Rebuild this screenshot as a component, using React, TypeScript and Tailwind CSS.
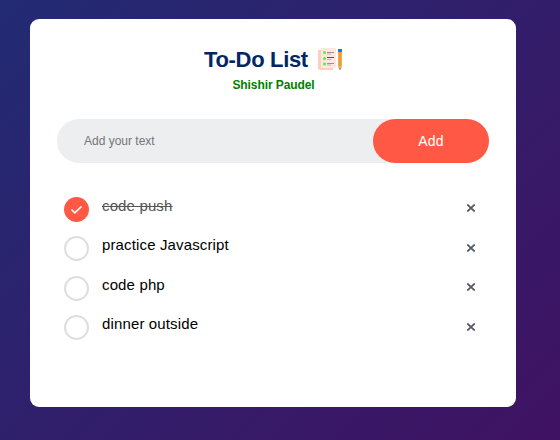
import { useState } from "react";

type Task = { text: string; done: boolean };

const initialTasks: Task[] = [
  { text: "code push", done: true },
  { text: "practice Javascript", done: false },
  { text: "code php", done: false },
  { text: "dinner outside", done: false },
];

function ListIcon() {
  return (
    <svg className="-mt-[2px] ml-[9px] h-[24px] w-[26px] shrink-0" viewBox="0 0 26 24">
      <path d="M1 3h15v20H3q-2 0-2-2z" fill="#fccfc3" />
      <path d="M4 1h15v18q0 2-2 2H4z" fill="#ffe7dc" />
      <g fill="#4df052">
        <circle cx="7.5" cy="5.5" r="1.5" />
        <circle cx="7.5" cy="11.5" r="1.5" />
        <circle cx="7.5" cy="17" r="1.5" />
      </g>
      <path d="M10 5.5h7M10 16.5h7" stroke="#a18ca1" strokeWidth="1" />
      <path d="M10 10.5h7" stroke="#65426d" strokeWidth="1" />
      <path d="M10 7h4M10 12.5h4M10 18h4" stroke="#c6afba" strokeWidth="1" />
      <g transform="translate(0 1)">
        <path d="M21 4h4v14l-1.4 3h-1.2L21 18z" fill="#f5ad48" />
        <path d="M22.5 4h1v14h-1z" fill="#d98b35" />
        <path d="M21 1h4v3h-4z" fill="#087eea" />
        <path d="M21 19h4l-1.3 2.5h-1.4z" fill="#d6b8a9" />
        <path d="M22.2 20.5h1.6L23 22z" fill="#5b465c" />
      </g>
    </svg>
  );
}

export default function App() {
  const [tasks, setTasks] = useState(initialTasks);
  const [draft, setDraft] = useState("");

  const add = () => {
    if (!draft.trim()) return;
    setTasks([...tasks, { text: draft, done: false }]);
    setDraft("");
  };

  return (
    <div className="h-[440px] w-full bg-linear-[135deg,#222b73,#401263] pt-[19px] pl-[30px] font-['Liberation_Sans',Arial,sans-serif]">
      <main className="h-[388px] w-[486px] rounded-[9px] bg-white px-[27px] pt-[27px]">
        <header className="h-[73px]">
          <h1 className="ml-[147px] flex h-[27px] items-center text-[22px] font-bold tracking-[-0.33px] whitespace-nowrap text-[#002765]">
            To-Do List
            <ListIcon />
          </h1>
          <p className="mt-[4px] pl-px text-center text-[12px] leading-4 font-bold tracking-[-0.08px] text-[#008000]">
            Shishir Paudel
          </p>
        </header>

        <div className="flex h-[44px] rounded-full bg-[#edeef0]">
          <input
            className="min-w-0 flex-1 bg-transparent pl-[27px] text-[12px] outline-none placeholder:text-[#757575]"
            placeholder="Add your text"
            value={draft}
            onChange={(e) => setDraft(e.target.value)}
          />
          <button className="w-[116px] rounded-full bg-[#ff5945] text-[14px] tracking-[0.2px] text-white" onClick={add}>
            Add
          </button>
        </div>

        <ul className="mt-[29px]">
          {tasks.map((task, i) => (
            <li key={i} className="flex h-[39.4px] items-start pt-[5px] pl-[7px]">
              <button
                className="shrink-0"
                aria-label="Toggle task"
                onClick={() => setTasks(tasks.map((t, j) => (j === i ? { ...t, done: !t.done } : t)))}
              >
                {task.done ? (
                  <span className="flex size-[25px] items-center justify-center rounded-full bg-[#ff5945]">
                    <svg className="size-[13px]" viewBox="0 0 13 13" fill="none" stroke="white" strokeWidth="1.7">
                      <path d="M1.5 6.5l3.3 3.3 6.7-6.3" />
                    </svg>
                  </span>
                ) : (
                  <span className="block size-[25px] rounded-full border-2 border-[#dedede]" />
                )}
              </button>
              <span
                className={
                  task.done
                    ? "ml-[13px] flex-1 text-[15px] leading-[18px] tracking-[0.14px] text-[#555] line-through"
                    : "ml-[13px] flex-1 text-[15px] leading-[18px] tracking-[0.14px] text-black"
                }
              >
                {task.text}
              </span>
              <button
                className="mt-[7.4px] mr-[14px]"
                aria-label="Remove task"
                onClick={() => setTasks(tasks.filter((_, j) => j !== i))}
              >
                <svg className="size-[8px]" viewBox="0 0 8 8" stroke="#555b65" strokeWidth="1.8">
                  <path d="M.3.5l7.4 7M7.7.5l-7.4 7" />
                </svg>
              </button>
            </li>
          ))}
        </ul>
      </main>
    </div>
  );
}
